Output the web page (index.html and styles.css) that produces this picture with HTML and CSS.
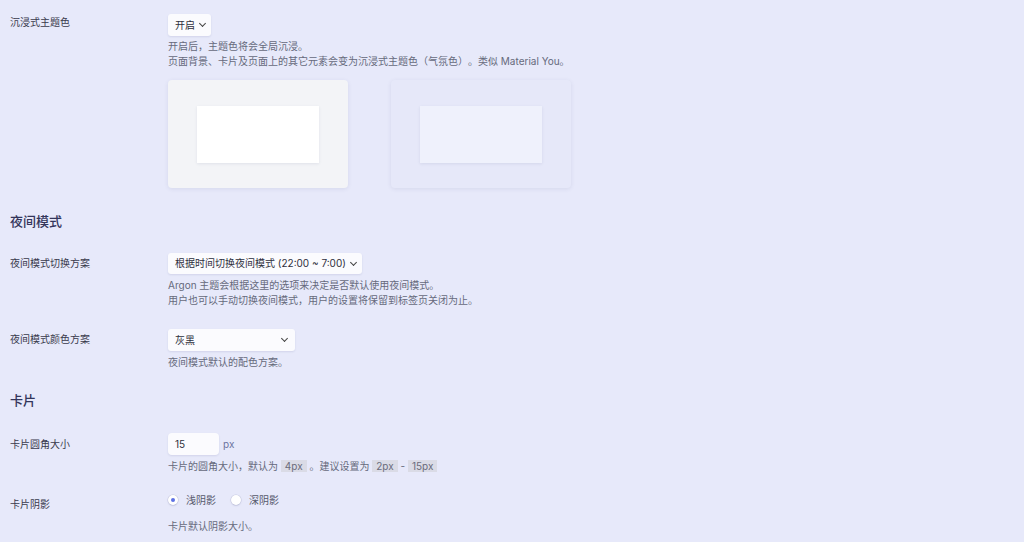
FILE: index.html
```html
<!DOCTYPE html>
<html lang="zh-CN">
<head>
<meta charset="utf-8">
<title>Argon 设置</title>
<link rel="stylesheet" href="styles.css">
</head>
<body>
<div class="page">
  <div class="row row-immersion">
    <div class="label">沉浸式主题色</div>
    <div class="field">
      <div class="select sel-auto">开启<span class="chev"></span></div>
      <div class="desc">开启后，主题色将会全局沉浸。<br>页面背景、卡片及页面上的其它元素会变为沉浸式主题色（气氛色）。类似 Material You。</div>
      <div class="previews">
        <div class="preview preview-normal"><div class="preview-card"></div></div>
        <div class="preview preview-immersive"><div class="preview-card"></div></div>
      </div>
    </div>
  </div>

  <h2 class="section section-night">夜间模式</h2>

  <div class="row row-night-switch">
    <div class="label">夜间模式切换方案</div>
    <div class="field">
      <div class="select sel-auto">根据时间切换夜间模式 (22:00 ~ 7:00)<span class="chev"></span></div>
      <div class="desc">Argon 主题会根据这里的选项来决定是否默认使用夜间模式。<br>用户也可以手动切换夜间模式，用户的设置将保留到标签页关闭为止。</div>
    </div>
  </div>

  <div class="row row-night-color">
    <div class="label">夜间模式颜色方案</div>
    <div class="field">
      <div class="select sel-wide">灰黑<span class="chev"></span></div>
      <div class="desc">夜间模式默认的配色方案。</div>
    </div>
  </div>

  <h2 class="section section-card">卡片</h2>

  <div class="row row-radius">
    <div class="label">卡片圆角大小</div>
    <div class="field">
      <div class="input-line"><div class="input">15</div><span class="unit">px</span></div>
      <div class="desc">卡片的圆角大小，默认为 <code>4px</code> 。建议设置为 <code>2px</code> - <code>15px</code></div>
    </div>
  </div>

  <div class="row row-shadow">
    <div class="label">卡片阴影</div>
    <div class="field">
      <div class="radios">
        <span class="radio checked"></span><span class="radio-text">浅阴影</span>
        <span class="radio"></span><span class="radio-text">深阴影</span>
      </div>
      <div class="desc desc-shadow">卡片默认阴影大小。</div>
    </div>
  </div>
</div>
</body>
</html>
```

FILE: styles.css
```css
html, body {
  margin: 0;
  padding: 0;
  background: #e7e9fa;
  height: 100%;
  overflow: hidden;
}
body {
  font-family: "Inter", "Noto Sans CJK SC", sans-serif;
  font-size: 10px;
  color: #3a3b4e;
  text-spacing-trim: space-all;
}
.page {
  padding-left: 10px;
}
.row {
  display: grid;
  grid-template-columns: 158px 1fr;
}
.label {
  line-height: 15px;
  color: #393a4c;
}
.field {
  display: flex;
  flex-direction: column;
  align-items: flex-start;
}
.desc {
  line-height: 15px;
  color: #666a7c;
  margin-top: 3.5px;
}
.select {
  display: flex;
  align-items: center;
  background: #fbfbfe;
  border-radius: 3px;
  box-shadow: 0 1px 2px rgba(60, 64, 120, 0.12);
  color: #2e2f3c;
  padding: 0 6px 0 7px;
  box-sizing: border-box;
  line-height: 15px;
}
.sel-auto { height: 22px; }
.sel-wide { height: 22px; width: 127px; justify-content: space-between; padding-right: 8px; }
.chev {
  display: inline-block;
  width: 4px;
  height: 4px;
  border-right: 1.2px solid #444;
  border-bottom: 1.2px solid #444;
  transform: rotate(45deg);
  margin: -3px 0 0 5px;
}

.row-immersion { margin-top: 14px; }
.row-immersion .label { padding-top: 1px; }
.row-immersion .desc { margin-top: 2.5px; }
.previews {
  display: flex;
  gap: 43px;
  margin-top: 11.5px;
}
.preview {
  width: 180px;
  height: 108px;
  border-radius: 4px;
  box-sizing: border-box;
  padding: 26px 0 0 29px;
  box-shadow: 0 1px 4px rgba(60, 64, 120, 0.10);
}
.preview-card {
  width: 122px;
  height: 57px;
  box-shadow: 0 1px 3px rgba(60, 64, 120, 0.10);
}
.preview-normal { background: #f3f4f7; }
.preview-normal .preview-card { background: #ffffff; }
.preview-immersive { background: #e6e8f9; }
.preview-immersive .preview-card { background: #eff1fc; }

.section {
  margin: 0;
  font-size: 13px;
  line-height: 18px;
  font-weight: 500;
  color: #33355a;
}
.section-night { margin-top: 24px; }
.row-night-switch { margin-top: 23px; }
.row-night-switch .label { padding-top: 2.5px; }
.row-night-switch .select { height: 21px; }
.row-night-color { margin-top: 21.5px; }
.row-night-color .label { padding-top: 2.5px; }
.section-card { margin-top: 21.5px; }

.row-radius { margin-top: 24px; }
.row-radius .label { padding-top: 3.5px; }
.input-line {
  display: flex;
  align-items: center;
}
.input {
  width: 51px;
  height: 22px;
  box-sizing: border-box;
  background: #fbfbfe;
  border-radius: 4px;
  box-shadow: 0 1px 2px rgba(60, 64, 120, 0.12);
  padding-left: 7px;
  line-height: 22px;
  color: #2e2f3c;
}
.unit {
  margin-left: 4px;
  color: #6c74a0;
  line-height: 15px;
}
code {
  font-family: inherit;
  font-size: 10px;
  background: #dadbe6;
  color: #6a6c7c;
  padding: 0 4px;
  display: inline-block;
  line-height: 12px;
}

.row-shadow { margin-top: 19px; }
.row-shadow .label { padding-top: 4px; }
.radios {
  display: flex;
  align-items: center;
  height: 15px;
  line-height: 15px;
  color: #55586a;
}
.radio {
  width: 10px;
  height: 10px;
  border-radius: 50%;
  background: #fff;
  box-shadow: 0 0 0 0.5px rgba(60, 64, 120, 0.18), 0 1px 2px rgba(60, 64, 120, 0.12);
  box-sizing: border-box;
  display: inline-flex;
  align-items: center;
  justify-content: center;
}
.radio.checked::after {
  content: "";
  width: 4px;
  height: 4px;
  border-radius: 50%;
  background: #5e72e4;
}
.radio-text {
  margin-left: 8px;
  margin-right: 15px;
}
.desc-shadow { margin-top: 11px; }
```
